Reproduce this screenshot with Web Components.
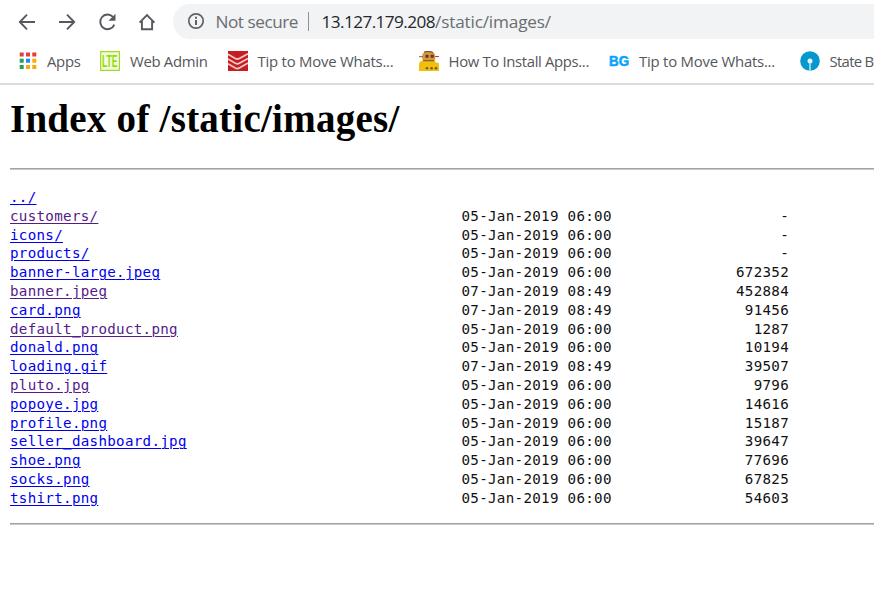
<!DOCTYPE html>
<html lang="en">
<head>
<meta charset="utf-8">
<title>Index of /static/images/</title>
<style>
html,body{margin:0;background:#fff;height:614px;overflow:hidden}
</style>
</head>
<body>
<browser-page></browser-page>
<script>
const define = (name, html, ready) => customElements.define(name, class extends HTMLElement {
  constructor() { super(); this.attachShadow({ mode: 'open' }).innerHTML = html; }
  connectedCallback() { if (ready) ready.call(this, this.shadowRoot); }
});

/* Text run spaced out to an exact width. */
define('fit-text', `<style>:host{display:block;white-space:pre;flex:none}span{display:inline-block;white-space:pre}</style><span></span>`, function (root) {
  const s = root.querySelector('span');
  s.textContent = this.getAttribute('text');
  const w = +this.getAttribute('w');
  this.style.width = w + 'px';
  s.style.letterSpacing = (w - s.getBoundingClientRect().width) / s.textContent.length + 'px';
});

const icons = {
  back: `<svg width="20" height="20" viewBox="0 0 20 20" fill="none" stroke="#55595e" stroke-width="1.9"><path d="M18 10H3M10 2.7 2.8 10l7.2 7.3"/></svg>`,
  forward: `<svg width="20" height="20" viewBox="0 0 20 20" fill="none" stroke="#55595e" stroke-width="1.9"><path d="M2 10h15M10 2.7l7.2 7.3-7.2 7.3"/></svg>`,
  reload: `<svg width="20" height="20" viewBox="0 0 20 20"><path d="M15.9 4.9A7.3 7.3 0 1 0 17.300 12.6" fill="none" stroke="#55595e" stroke-width="1.9"/><path d="M18.5 1.7v7h-7z" fill="#55595e"/></svg>`,
  home: `<svg width="20" height="20" viewBox="0 0 20 20" fill="none" stroke="#55595e" stroke-width="1.9"><path d="M2.6 10.6 10 3l7.4 7.6M4.9 9v8.3h10.2V9"/></svg>`,
  info: `<svg width="18" height="18" viewBox="0 0 18 18"><circle cx="9" cy="9" r="7.2" fill="none" stroke="#5f6368" stroke-width="1.7"/><path d="M8 7.9h2v5H8zM8 4.8h2v2H8z" fill="#5f6368"/></svg>`,
  apps: `<svg width="20" height="20" viewBox="0 0 20 20"><g fill="#e73c3c"><path d="M1.7 1.5h4v4h-4zM8 1.5h4v4H8zM14.3 1.5h4v4h-4z"/></g><path fill="#23a05a" d="M1.7 7.7h4v4h-4zM1.7 14h4v4h-4z"/><path fill="#2583f5" d="M8 7.7h4v4H8z"/><path fill="#fcab05" d="M14.3 7.7h4v4h-4zM8 14h4v4H8zM14.3 14h4v4h-4z"/></svg>`,
  lte: `<svg width="20" height="20" viewBox="0 0 20 20"><path d="M.6.6h18.8v18.8H.6z" fill="#f4fadf" stroke="#a3d927" stroke-width="1.2"/><text x="2" y="16.3" font-family="Liberation Sans Narrow,Liberation Sans" font-weight="bold" font-size="17" textLength="15.600" lengthAdjust="spacingAndGlyphs" fill="#8ee000">LTE</text></svg>`,
  red: `<svg width="20" height="20" viewBox="0 0 20 20"><path fill="#c51d20" d="M0 0h20v20H0z"/><g fill="none" stroke="#f4c9c8" stroke-width="1.7"><path d="M0 3.3l7.3 4.3q2.2 1.1 4 0L20 2.7M0 8l7.3 4.3q2.2 1.1 4 0L20 7.4M0 12.7 7.3 17q2.2 1.1 4 0l8.7-4.9"/></g></svg>`,
  robot: `<svg width="22" height="20" viewBox="0 0 22 20"><path fill="#f2bf0c" d="M1 20v-6.5Q1 9.5 6 9.5h9q2 0 3 2l3 .8V20z"/><path fill="#d49a3b" d="M6 1.5Q7 .2 11 .2q6 0 6.2 4.8v3.5q0 1.5-2 1.5H6.5Q4.300 10 4.300 8V4q0-1.500 1.700-2.500z"/><path d="M6 1.200Q11-.7 15 1.800M5 9.800h11" fill="none" stroke="#765035" stroke-width="1.100"/><path fill="#6d3028" d="M7.500 3.700h3v3h-3zM12.700 3.700h3v3h-3z"/><path d="M1 5.700h4M17 5.500h4" stroke="#a84a42"/><g fill="#725d20"><circle cx="9" cy="17.300" r="1.300"/><circle cx="13.600" cy="17.300" r="1.300"/><circle cx="18" cy="17.300" r="1.300"/></g></svg>`,
  bg: `<svg width="20" height="20" viewBox="0 0 20 20"><text x="0" y="15" font-family="Liberation Sans" font-weight="bold" font-size="14" textLength="20" lengthAdjust="spacingAndGlyphs" fill="#05a3ff" stroke="#05a3ff" stroke-width=".5">BG</text></svg>`,
  sbi: `<svg width="20" height="20" viewBox="0 0 20 20"><circle cx="10" cy="10" r="9.800" fill="#0598cf"/><circle cx="10" cy="10" r="2.500" fill="#e9f8fc"/><path d="M9.300 11h1.400v9H9.300z" fill="#c8ebf5"/></svg>`
};
define('ui-icon', `<style>:host{display:block;flex:none;line-height:0}svg{display:block}</style><div></div>`, function (root) {
  root.querySelector('div').innerHTML = icons[this.getAttribute('name')];
});

define('nav-bar', `<style>
:host{display:flex;height:43px;padding:0 0 0 17px;box-sizing:border-box;font:17.200px "Open Sans","Noto Sans",sans-serif;color:#6a6d71}
nav{display:flex;gap:19.900px;height:43px;align-items:center;width:156px}
.pill{display:flex;align-items:center;flex:1;margin-top:4px;height:34.500px;border-radius:17px 0 0 17px;background:#f1f3f4;padding-left:14px;box-sizing:border-box}
ui-icon+fit-text{margin-left:10.500px}
i{width:1.500px;height:19px;background:#8f9295;margin:0 12.500px 0 9.500px}
.host{color:#25272a}
</style><nav><ui-icon name="back"></ui-icon><ui-icon name="forward"></ui-icon><ui-icon name="reload"></ui-icon><ui-icon name="home"></ui-icon></nav>
<div class="pill"><ui-icon name="info"></ui-icon><fit-text text="Not secure" w="82.500"></fit-text><i></i><fit-text class="host" text="13.127.179.208" w="113.500"></fit-text><fit-text text="/static/images/" w="116"></fit-text></div>`);

customElements.define('bookmark-bar', class extends HTMLElement {
  constructor() {
    super();
    const items = [
      ['apps', 'Apps', 33.5, 9, 19.5], ['lte', 'Web Admin', 77.5, 10, 20.500],
      ['red', 'Tip to Move Whats...', 136, 9.500, 24.500], ['robot', 'How To Install Apps...', 140.500, 8.500, 20],
      ['bg', 'Tip to Move Whats...', 136, 10, 25], ['sbi', 'State B', 44, 9.5, 0]];
    this.attachShadow({ mode: 'open' }).innerHTML = `<style>
:host{display:flex;height:42px;padding:0 0 5px 18px;box-sizing:border-box;align-items:center;overflow:hidden;border-bottom:2px solid #dadadf;font:14.900px "Open Sans","Noto Sans",sans-serif;color:#55575c}
div{display:flex;align-items:center;flex:none}
</style>` + items.map(([i, t, w, g, m]) => `<div style="gap:${g}px;margin-right:${m}px"><ui-icon name="${i}"></ui-icon><fit-text text="${t}" w="${w}"></fit-text></div>`).join('');
  }
});

define('file-row', `<style>
:host{display:grid;grid-template-columns:451.500px 151px 176.500px;height:18.810px;line-height:18.810px;color:#111}
a{text-decoration:underline;text-decoration-thickness:1px;text-underline-offset:1.500px;color:#0000ee}
:host([visited]) a{color:#551a8b}
.size{text-align:right}
span{white-space:pre}
</style><span><a href="#"></a></span><span class="date"></span><span class="size"></span>`, function (root) {
  root.querySelector('a').textContent = this.getAttribute('name');
  root.querySelector('.date').textContent = this.getAttribute('date') || '';
  root.querySelector('.size').textContent = this.getAttribute('size') || '';
});

const A = '05-Jan-2019 06:00', B = '07-Jan-2019 08:49';
const files = [['../', '', ''], ['customers/', A, '-', 1], ['icons/', A, '-'], ['products/', A, '-'],
  ['banner-large.jpeg', A, '672352'], ['banner.jpeg', B, '452884', 1], ['card.png', B, '91456'],
  ['default_product.png', A, '1287', 1], ['donald.png', A, '10194'], ['loading.gif', B, '39507'],
  ['pluto.jpg', A, '9796', 1], ['popoye.jpg', A, '14616'], ['profile.png', A, '15187'],
  ['seller_dashboard.jpg', A, '39647'], ['shoe.png', A, '77696'], ['socks.png', A, '67825'], ['tshirt.png', A, '54603']];
define('file-index', `<style>
:host{display:block;padding:13px 0 0 10px}
h1{margin:0;height:70px;font:bold 39px/42px "Liberation Serif",serif;color:#000}
hr{margin:0;border:0;height:2px;background:linear-gradient(#a2a2a2 50%,#c8c8c8 50%)}
section{padding:18px 0 15.230px;font:14.200px "DejaVu Sans Mono",monospace;letter-spacing:.298px}
</style><h1><fit-text text="Index of /static/images/" w="389.500"></fit-text></h1><hr><section>${
  files.map(([n, d, s, v]) => `<file-row name="${n}" date="${d}" size="${s}"${v ? ' visited' : ''}></file-row>`).join('')
}</section><hr>`);

define('browser-page', `<style>:host{display:block;width:874px;height:614px;overflow:hidden;background:#fff}</style><nav-bar></nav-bar><bookmark-bar></bookmark-bar><file-index></file-index>`);
</script>
</body>
</html>
